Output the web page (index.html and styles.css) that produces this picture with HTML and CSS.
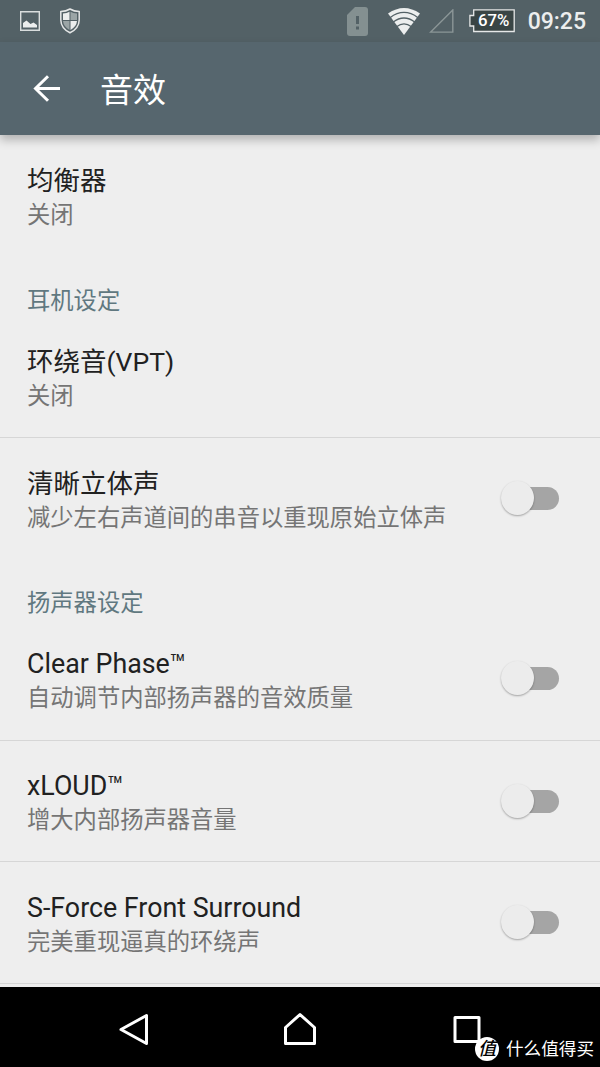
FILE: index.html
```html
<!DOCTYPE html>
<html lang="zh-CN">
<head>
    <meta charset="UTF-8">
    <title>音效</title>
    <meta name="viewport" content="width=device-width, initial-scale=1">
    <link rel="stylesheet" href="styles.css">
</head>
<body>
<div class="screen">
    <div class="status-bar">
        <svg class="icon-picture" width="20" height="20" viewBox="0 0 20 20">
            <path d="M0.7 0.7H19.3V19.3H0.7Z" fill="none" stroke="#d9dddd" stroke-width="1.4"/>
            <path d="M3 16.5V12L6.5 9.5L10.5 13L13.5 11.5L17 14V16.5Z" fill="#eceeee"/>
        </svg>
        <svg class="icon-shield" width="20" height="26" viewBox="0 0 20 26">
            <path d="M10 1Q14 3.4 19.2 3.6V12Q19 20.500 10 24.800Q1 20.500 0.800 12V3.600Q6 3.400 10 1Z" fill="#536166" stroke="#e4e6e6" stroke-width="1.5"/>
            <path d="M9.500 3.800V12H3V5.500Q7 5.200 9.500 3.800Z" fill="#eceeee"/>
            <path d="M10.500 3.800V12H17V5.500Q13 5.200 10.500 3.800Z" fill="#9ba5a6"/>
            <path d="M3 13H9.500V22Q3.500 18.500 3 13Z" fill="#9ba5a6"/>
            <path d="M17 13H10.500V22Q16.500 18.500 17 13Z" fill="#eceeee"/>
        </svg>
        <div class="status-right">
            <svg class="icon-sim" width="21" height="29" viewBox="0 0 21 29">
                <path d="M8 0H18Q21 0 21 3V26Q21 29 18 29H3Q0 29 0 26V8Z" fill="#849091"/>
                <path d="M9 9H12V17H9ZM9 19.500H12V22.500H9Z" fill="#536166"/>
            </svg>
            <svg class="icon-wifi" width="32" height="27" viewBox="0 0 32 27">
                <path d="M0 5.500Q16 -5.500 32 5.500L16 27Z" fill="#eceeee"/>
                <g fill="none" stroke="#536166" stroke-width="1.300">
                    <path d="M2 9.700Q16 -0.800 30 9.700"/>
                    <path d="M5 14.200Q16 5.800 27 14.200"/>
                    <path d="M8.500 18.800Q16 12.800 23.500 18.800"/>
                </g>
            </svg>
            <svg class="icon-signal" width="25" height="25" viewBox="0 0 25 25">
                <path d="M23.800 1V23.100H1.700Z" fill="none" stroke="#8b9697" stroke-width="1.400"/>
            </svg>
            <div class="battery">
                <svg width="46" height="24" viewBox="0 0 46 24">
                    <path d="M4.700 0.800H45.200V22.500H4.700V17H0.900V6.500H4.700Z" fill="#394545" stroke="#e6e8e8" stroke-width="1.300"/>
                </svg>
                <span class="battery-level">67%</span>
            </div>
            <span class="clock">09:25</span>
        </div>
    </div>

    <div class="app-bar">
        <svg width="28" height="28" viewBox="0 0 28 28">
            <path d="M27 13.500H2.500M15 1.200L2.500 13.500L15 25.800" fill="none" stroke="#fff" stroke-width="3"/>
        </svg>
        <h1>音效</h1>
    </div>

    <div class="settings">
        <div class="row">
            <div class="row-text">
                <div class="title">均衡器</div>
                <div class="summary">关闭</div>
            </div>
        </div>

        <h2>耳机设定</h2>
        <div class="row">
            <div class="row-text">
                <div class="title">环绕音(VPT)</div>
                <div class="summary">关闭</div>
            </div>
        </div>
        <div class="row divided">
            <div class="row-text">
                <div class="title">清晰立体声</div>
                <div class="summary">减少左右声道间的串音以重现原始立体声</div>
            </div>
            <div class="switch"><div class="thumb"></div></div>
        </div>

        <h2>扬声器设定</h2>
        <div class="row">
            <div class="row-text">
                <div class="title latin">Clear Phase™</div>
                <div class="summary">自动调节内部扬声器的音效质量</div>
            </div>
            <div class="switch"><div class="thumb"></div></div>
        </div>
        <div class="row divided">
            <div class="row-text">
                <div class="title latin">xLOUD™</div>
                <div class="summary">增大内部扬声器音量</div>
            </div>
            <div class="switch"><div class="thumb"></div></div>
        </div>
        <div class="row divided">
            <div class="row-text">
                <div class="title latin">S-Force Front Surround</div>
                <div class="summary">完美重现逼真的环绕声</div>
            </div>
            <div class="switch"><div class="thumb"></div></div>
        </div>
        <div class="row divided"></div>
    </div>

    <div class="nav-bar">
        <svg width="34" height="34" viewBox="0 0 34 34">
            <path d="M30.500 3.500V31.500L5 17.500Z" fill="none" stroke="#fff" stroke-width="3" stroke-linejoin="round"/>
        </svg>
        <svg width="34" height="34" viewBox="0 0 34 34">
            <path d="M2.500 15.500L17 2.500L31.500 15.500V31.500H2.500Z" fill="none" stroke="#fff" stroke-width="3" stroke-linejoin="round"/>
        </svg>
        <svg width="34" height="34" viewBox="0 0 34 34">
            <path d="M5 5.500H29V29.500H5Z" fill="none" stroke="#fff" stroke-width="3" stroke-linejoin="round"/>
        </svg>
    </div>

    <div class="watermark">
        <span class="badge"><i>值</i></span>
        <span>什么值得买</span>
    </div>
</div>
</body>
</html>
```
FILE: styles.css
```css
* {
    box-sizing: border-box;
}
body {
    margin: 0;
    font-family: Roboto, "Noto Sans CJK SC", sans-serif;
    background: #eeeeee;
    color: #212121;
}
svg {
    display: block;
    flex: none;
}
.screen {
    position: relative;
    display: flex;
    flex-direction: column;
    width: 600px;
    height: 1067px;
    overflow: hidden;
}
.status-bar {
    display: flex;
    flex: none;
    align-items: center;
    height: 42px;
    padding: 0 14px 0 20px;
    background: #536166;
}
.icon-shield {
    margin-left: 20px;
}
.status-right {
    display: flex;
    align-items: center;
    margin-left: auto;
}
.icon-wifi {
    margin-left: 20px;
}
.icon-signal {
    margin-left: 9px;
}
.battery {
    position: relative;
    margin-left: 15px;
}
.battery-level {
    position: absolute;
    top: 0;
    left: 5px;
    width: 40px;
    line-height: 23px;
    font-size: 16.8px;
    font-weight: 500;
    text-align: center;
    color: #fff;
}
.clock {
    margin-left: 13px;
    padding-top: 2px;
    font-size: 23px;
    font-weight: 500;
    line-height: 40px;
    color: #eceeee;
}
.app-bar {
    position: relative;
    display: flex;
    flex: none;
    align-items: center;
    height: 93px;
    padding-left: 33px;
    background: #56666e;
    box-shadow: 0 5px 9px rgba(0,0,0,0.25);
}
h1 {
    margin: 0 0 0 39px;
    padding-top: 4px;
    font-size: 33px;
    font-weight: 400;
    line-height: 48px;
    color: #fff;
}
.settings {
    flex: 1;
    overflow: hidden;
}
.row {
    display: flex;
    align-items: center;
    justify-content: space-between;
    height: 121.7px;
    padding: 0 41px 0 27px;
}
.row-text {
    padding-top: 2px;
}
.divided {
    border-top: 1px solid #d6d6d6;
}
.title {
    font-size: 26.5px;
    line-height: 36px;
}
.latin {
    font-size: 26.8px;
}
.summary {
    font-size: 23.3px;
    line-height: 32px;
    color: #757575;
}
h2 {
    height: 59px;
    margin: 0;
    padding: 27px 27px 0;
    font-size: 23.3px;
    font-weight: 400;
    line-height: 34px;
    color: #607880;
}
.switch {
    position: relative;
    width: 43px;
    height: 23px;
    border-radius: 12px;
    background: #a5a5a5;
}
.thumb {
    position: absolute;
    top: -6px;
    left: -15px;
    width: 33px;
    height: 34px;
    border-radius: 50%;
    background: #ececec;
    box-shadow: 0 1px 2px rgba(0,0,0,0.32);
}
.nav-bar {
    display: flex;
    flex: none;
    align-items: center;
    justify-content: space-between;
    height: 80px;
    padding: 4px 116px 0;
    background: #000;
}
.watermark {
    position: absolute;
    right: 6px;
    bottom: 6px;
    display: flex;
    align-items: center;
    gap: 7px;
    font-size: 17.6px;
    line-height: 24px;
    color: #fff;
}
.badge {
    width: 24px;
    height: 24px;
    border-radius: 50%;
    background: #fff;
    color: #000;
    font-size: 18px;
    font-weight: 500;
    line-height: 23px;
    text-align: center;
}
```
